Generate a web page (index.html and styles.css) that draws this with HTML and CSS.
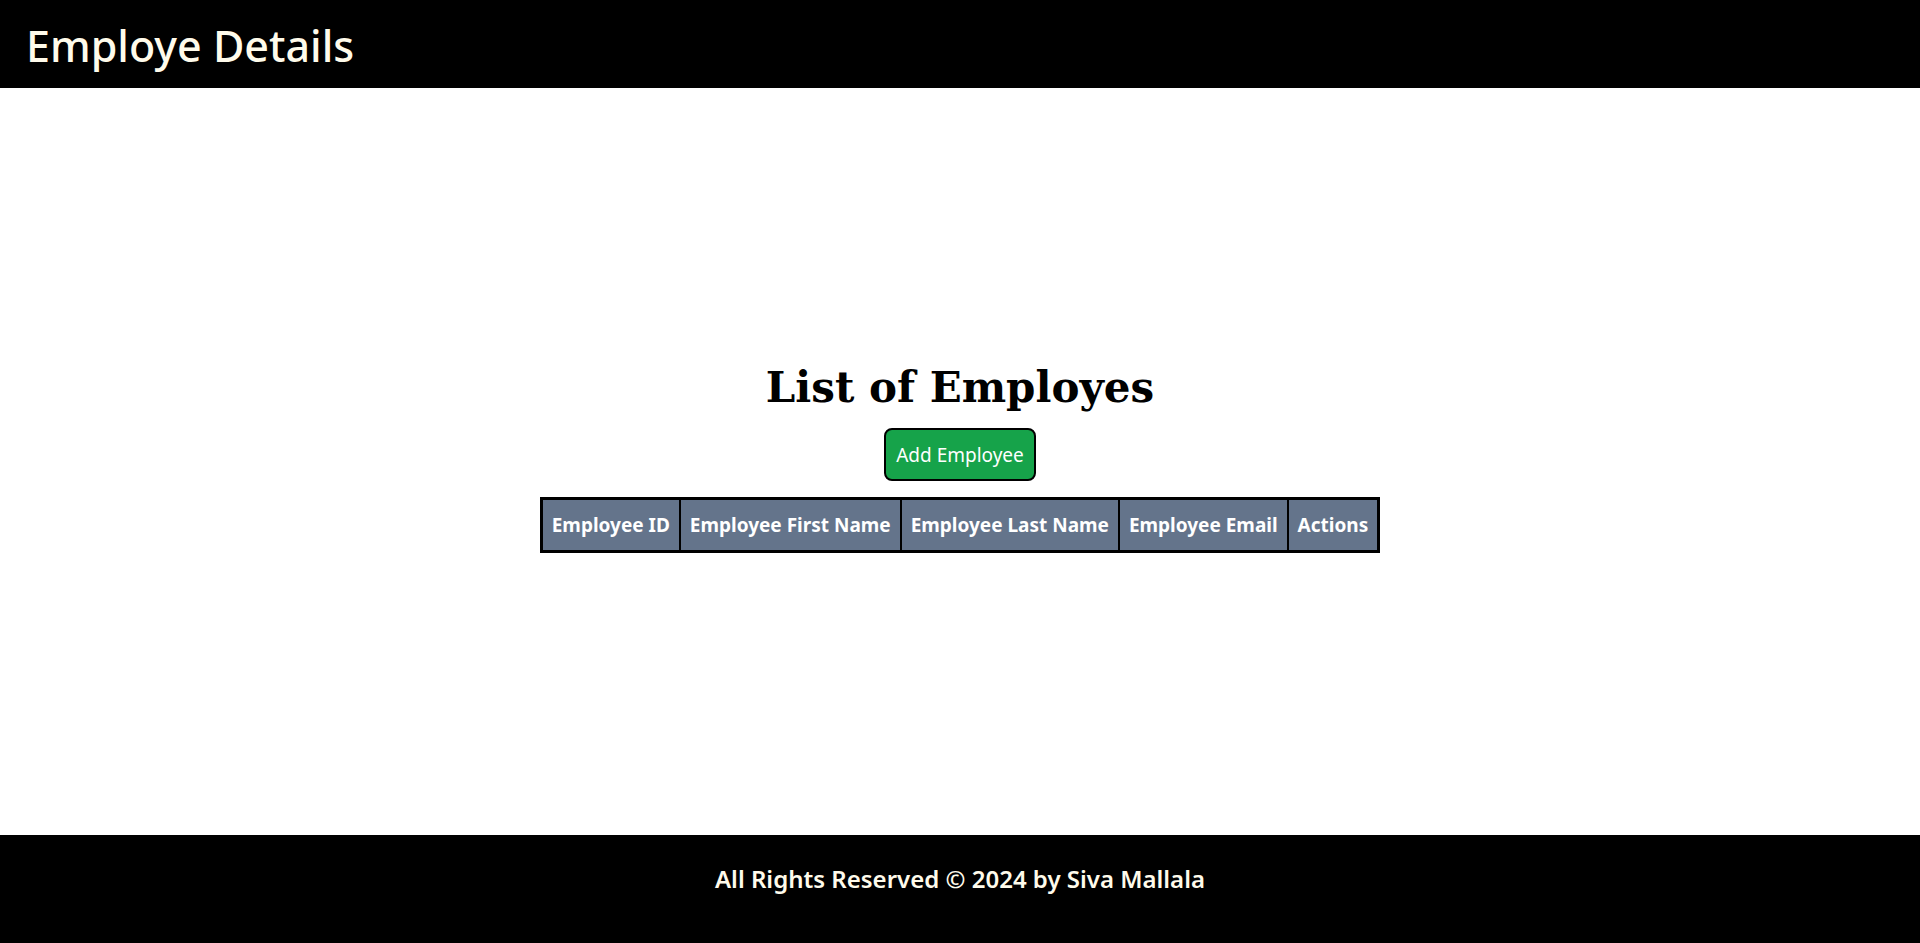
FILE: index.html
```html
<!DOCTYPE html>
<html lang="en">
<head>
<meta charset="utf-8">
<title>Employe Details</title>
<link rel="stylesheet" href="styles.css">
</head>
<body>
<header class="topbar">
  <h1 class="brand">Employe Details</h1>
</header>
<main class="content">
  <h2 class="page-title">List of Employes</h2>
  <button class="add-btn" type="button">Add Employee</button>
  <table class="emp-table">
    <thead>
      <tr>
        <th>Employee ID</th>
        <th>Employee First Name</th>
        <th>Employee Last Name</th>
        <th>Employee Email</th>
        <th>Actions</th>
      </tr>
    </thead>
    <tbody></tbody>
  </table>
</main>
<footer class="bottombar">
  <p class="copy">All Rights Reserved © 2024 by Siva Mallala</p>
</footer>
</body>
</html>
```
FILE: styles.css
```css
* { box-sizing: border-box; }
html, body { margin: 0; padding: 0; }
body {
  height: 943px;
  display: flex;
  flex-direction: column;
  font-family: "Noto Sans", "Open Sans", sans-serif;
  background: #fff;
}
.topbar {
  height: 88px;
  background: #000;
  display: flex;
  align-items: center;
  padding: 2px 26px 0;
}
.brand {
  margin: 0;
  color: #fffbeb;
  font-size: 43px;
  font-weight: 500;
  line-height: 1;
}
.content {
  flex: 1;
  display: flex;
  flex-direction: column;
  align-items: center;
  justify-content: center;
  padding-bottom: 7px;
}
.page-title {
  margin: 0 0 15px;
  font-family: "DejaVu Serif", Georgia, serif;
  font-weight: 700;
  font-size: 42px;
  line-height: 1.2;
}
.add-btn {
  width: 152px;
  height: 53px;
  background: #16a34a;
  color: #fff;
  border: 2px solid #000;
  border-radius: 8px;
  font-family: inherit;
  font-size: 19px;
  margin-bottom: 16px;
  cursor: pointer;
}
.emp-table {
  border-collapse: collapse;
  border: 3px solid #000;
  background: #64748b;
}
.emp-table th {
  border: 2px solid #000;
  color: #fff;
  font-weight: 700;
  font-size: 19px;
  padding: 12px 9px;
  white-space: nowrap;
}
.bottombar {
  height: 108px;
  background: #000;
  display: flex;
  align-items: flex-start;
  justify-content: center;
  padding-top: 27px;
}
.copy {
  margin: 0;
  color: #fffbeb;
  font-size: 24px;
  font-weight: 600;
  line-height: 1.4;
}
```
